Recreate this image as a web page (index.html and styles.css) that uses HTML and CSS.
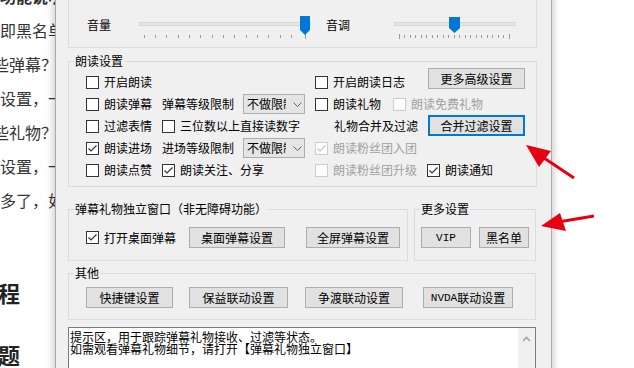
FILE: index.html
```html
<!DOCTYPE html>
<html lang="zh-CN">
<head>
<meta charset="utf-8">
<title>朗读设置</title>
<link rel="stylesheet" href="styles.css">
</head>
<body>
<div class="doc">
  <p class="b">功能说明</p>
  <p>即黑名单</p>
  <p class="shift">些弹幕？</p>
  <p>设置，一</p>
  <p class="shift">些礼物？</p>
  <p>设置，一</p>
  <p>多了，如</p>
  <p class="h h1">程</p>
  <p class="h h2">题</p>
</div>

<div class="dialog">
  <div class="group vol">
    <span class="lbl">音量</span>
    <svg class="slider s1" width="180" height="26" viewBox="0 0 180 26">
      <rect x="3.5" y="8.5" width="171" height="3" fill="#e7e7e7" stroke="#d6d6d6"/>
      <path d="M8.5 21v3M19.5 21v3M30.5 21v3M42.5 21v3M53.5 21v3M64.5 21v3M76.5 21v3M87.5 21v3M98.5 21v3M110.5 21v3M121.5 21v3M132.5 21v3M144.5 21v3M155.5 21v3M169.5 20v5" stroke="#9a9a9a" fill="none"/>
      <path d="M164 2H174V16L169 21L164 16Z" fill="#0078d7"/>
    </svg>
    <span class="lbl l2">音调</span>
    <svg class="slider s2" width="130" height="26" viewBox="0 0 130 26">
      <rect x="4.5" y="8.5" width="121" height="3" fill="#e7e7e7" stroke="#d6d6d6"/>
      <path d="M9.5 20v5M14.5 21v3M20.5 21v3M25.5 21v3M31.5 21v3M36.5 21v3M42.5 21v3M47.5 21v3M53.5 21v3M58.5 21v3M64.5 21v3M69.5 21v3M75.5 21v3M80.5 21v3M86.5 21v3M91.5 21v3M97.5 21v3M102.5 21v3M108.5 21v3M113.5 21v3M119.5 20v5" stroke="#9a9a9a" fill="none"/>
      <path d="M59 3H70V14L64.5 19L59 14Z" fill="#0078d7"/>
    </svg>
  </div>

  <div class="group read">
    <span class="gt">朗读设置</span>
    <div class="rgrid">
      <div class="cb c1"><span class="box"></span>开启朗读</div>
      <div class="cb c4-6"><span class="box"></span>开启朗读日志</div>
      <div class="btn c7 b-adv">更多高级设置</div>

      <div class="cb c1"><span class="box"></span>朗读弹幕</div>
      <div class="txt c2">弹幕等级限制</div>
      <div class="combo c3"><span class="val">不做限制</span><svg width="9" height="5" viewBox="0 0 9 5"><path d="M0.5 0.5L4.5 4.5L8.5 0.5" stroke="#606060" fill="none"/></svg></div>
      <div class="cb c4-5"><span class="box"></span>朗读礼物</div>
      <div class="cb dis c6-7"><span class="box"></span>朗读免费礼物</div>

      <div class="cb c1"><span class="box"></span>过滤表情</div>
      <div class="cb c2-3"><span class="box"></span>三位数以上直接读数字</div>
      <div class="txt c5-6">礼物合并及过滤</div>
      <div class="btn focus c7 b-merge">合并过滤设置</div>

      <div class="cb c1"><span class="box on"><svg viewBox="0 0 11 11"><path d="M1.5 5.5L4 8L9.5 2.5" stroke="#333" stroke-width="1.2" fill="none"/></svg></span>朗读进场</div>
      <div class="txt c2">进场等级限制</div>
      <div class="combo c3"><span class="val">不做限制</span><svg width="9" height="5" viewBox="0 0 9 5"><path d="M0.5 0.5L4.5 4.5L8.5 0.5" stroke="#606060" fill="none"/></svg></div>
      <div class="cb dis c4-7"><span class="box on"><svg viewBox="0 0 11 11"><path d="M1.5 5.5L4 8L9.5 2.5" stroke="#c4c4c4" stroke-width="1.2" fill="none"/></svg></span>朗读粉丝团入团</div>

      <div class="cb c1"><span class="box"></span>朗读点赞</div>
      <div class="cb c2-3"><span class="box on"><svg viewBox="0 0 11 11"><path d="M1.5 5.5L4 8L9.5 2.5" stroke="#333" stroke-width="1.2" fill="none"/></svg></span>朗读关注、分享</div>
      <div class="cb dis c4-6"><span class="box"></span>朗读粉丝团升级</div>
      <div class="cb c7"><span class="box on"><svg viewBox="0 0 11 11"><path d="M1.5 5.5L4 8L9.5 2.5" stroke="#333" stroke-width="1.2" fill="none"/></svg></span>朗读通知</div>
    </div>
  </div>

  <div class="pair">
    <div class="group win">
      <span class="gt">弹幕礼物独立窗口（非无障碍功能）</span>
      <div class="wrow">
        <div class="cb"><span class="box on"><svg viewBox="0 0 11 11"><path d="M1.5 5.5L4 8L9.5 2.5" stroke="#333" stroke-width="1.2" fill="none"/></svg></span>打开桌面弹幕</div>
        <div class="btn w96">桌面弹幕设置</div>
        <div class="btn w94">全屏弹幕设置</div>
      </div>
    </div>
    <div class="group more">
      <span class="gt">更多设置</span>
      <div class="mrow">
        <div class="btn w50"><span class="lat">VIP</span></div>
        <div class="btn w50">黑名单</div>
      </div>
    </div>
  </div>

  <div class="group other">
    <span class="gt">其他</span>
    <div class="orow">
      <div class="btn w87">快捷键设置</div>
      <div class="btn w99">保益联动设置</div>
      <div class="btn w98">争渡联动设置</div>
      <div class="btn w90"><span class="lat">NVDA</span>联动设置</div>
    </div>
  </div>

  <div class="log">
    <div class="logtext">提示区，用于跟踪弹幕礼物接收、过滤等状态。<br>如需观看弹幕礼物细节，请打开【弹幕礼物独立窗口】</div>
    <div class="sbar"><svg width="9" height="6" viewBox="0 0 9 6"><path d="M1 5L4.5 1.5L8 5" stroke="#a3a3a3" stroke-width="1.6" fill="none"/></svg></div>
  </div>
</div>

<svg class="arrows" width="634" height="368" viewBox="0 0 634 368">
  <line x1="544" y1="158" x2="574" y2="178" stroke="#e60012" stroke-width="3"/>
  <polygon points="526,145 551,151 539,167" fill="#e60012"/>
  <line x1="558" y1="222" x2="594" y2="216" stroke="#e60012" stroke-width="3"/>
  <polygon points="541,226 560,213 566,231" fill="#e60012"/>
</svg>
</body>
</html>
```

FILE: styles.css
```css
* { box-sizing: border-box; margin: 0; padding: 0; }
html, body { width: 634px; height: 368px; overflow: hidden; background: #fff; }
body { position: relative; font-family: "Noto Sans CJK SC", "Noto Sans", sans-serif; }

.doc { color: #333; font-size: 16px; line-height: 34px; margin-top: -21px; white-space: nowrap; }
.doc .b { font-weight: 700; }
.doc .shift { margin-left: -7px; }
.doc .h { font-size: 22px; font-weight: 700; color: #222; margin-left: -2px; }
.doc .h1 { margin-top: 58px; }
.doc .h2 { margin-top: 28px; }

.dialog {
  position: absolute; left: 55px; top: -30px; z-index: 1;
  width: 497px; height: 420px;
  background: #f0f0f0; border: 1px solid #aaaaaa;
  box-shadow: 0 0 9px rgba(0, 0, 0, 0.28);
  padding: 0 15px 0 12px;
  font-size: 12px; color: #000; line-height: 14px;
}

.group { border: 1px solid #dcdcdc; }
.gt {
  display: block; width: max-content; height: 14px; line-height: 14px;
  margin: -8px 0 0 5px; padding: 0 1px; background: #f0f0f0;
}

.vol { height: 77px; margin-right: -1px; padding: 42px 0 7px 18px; display: flex; align-items: flex-start; }
.lbl { line-height: 22px; width: 24px; white-space: nowrap; }
.slider { display: block; flex: none; }
.s1 { margin-left: 25px; }
.l2 { margin-left: 10px; }
.s2 { margin-left: 40px; }

.read { margin-top: 13px; margin-right: -1px; padding-bottom: 5px; }
.rgrid {
  display: grid; margin-top: 3px; padding-left: 17px;
  grid-template-columns: 76px 81px 72px 19px 59px 34px 100px;
  grid-auto-rows: 22px; align-items: center;
}
.c1 { grid-column: 1; }
.c2 { grid-column: 2; }
.c3 { grid-column: 3; }
.c7 { grid-column: 7; }
.c2-3 { grid-column: 2 / 4; }
.c4-5 { grid-column: 4 / 6; }
.c4-6 { grid-column: 4 / 7; }
.c4-7 { grid-column: 4 / 8; }
.c5-6 { grid-column: 5 / 7; }
.c6-7 { grid-column: 6 / 8; }

.cb { display: flex; align-items: center; gap: 5px; white-space: nowrap; }
.box { width: 13px; height: 13px; border: 1px solid #333; background: #fff; flex: none; }
.box svg { display: block; width: 11px; height: 11px; }
.cb.dis { color: #a0a0a0; }
.cb.dis .box { border-color: #cccccc; background: #fcfcfc; }
.txt { white-space: nowrap; }

.btn {
  height: 21px; border: 1px solid #adadad; background: #e1e1e1;
  display: flex; align-items: center; justify-content: center; white-space: nowrap;
}
.btn.focus { border: 2px solid #0078d7; }
.b-adv { width: 97px; margin-left: 1px; align-self: start; margin-top: -3px; }
.b-merge { width: 97px; margin-left: 1px; align-self: start; }
.lat { font-family: "Liberation Mono", monospace; font-size: 11px; }

.combo {
  width: 62px; height: 20px; border: 1px solid #adadad; background: #e5e5e5;
  display: flex; align-items: center; padding-left: 3px;
}
.combo .val { width: 39px; overflow: hidden; white-space: nowrap; }
.combo svg { margin-left: 7px; display: block; }

.pair { display: flex; margin-top: 22px; }
.win { width: 340px; padding-bottom: 12px; }
.more { flex: 1; margin-left: 6px; padding-bottom: 12px; }
.wrow {
  display: grid; grid-template-columns: 103px 117px 94px; margin-top: 11px;
  padding-left: 17px; height: 21px; align-items: center;
}
.w96 { width: 96px; }
.w94 { width: 94px; }
.mrow { display: flex; gap: 8px; margin-top: 11px; padding-left: 6px; }
.w50 { width: 50px; }

.other { margin-top: 12px; padding-bottom: 11px; }
.orow {
  display: grid; grid-template-columns: 103px 116px 118px auto; margin-top: 7px;
  padding-left: 17px; height: 21px;
}
.w87 { width: 87px; }
.w99 { width: 99px; }
.w98 { width: 98px; }
.w90 { width: 90px; }

.log {
  margin-top: 7px; height: 60px; border: 1px solid #7a7a7a; background: #fff;
  display: flex;
}
.logtext { flex: 1; padding: 3px 0 0 1px; line-height: 12px; font-size: 12px; white-space: nowrap; }
.sbar { width: 17px; background: #f0f0f0; display: flex; justify-content: center; padding-top: 8px; }
.sbar svg { display: block; }

.arrows { position: absolute; left: 0; top: 0; z-index: 2; pointer-events: none; }
```
